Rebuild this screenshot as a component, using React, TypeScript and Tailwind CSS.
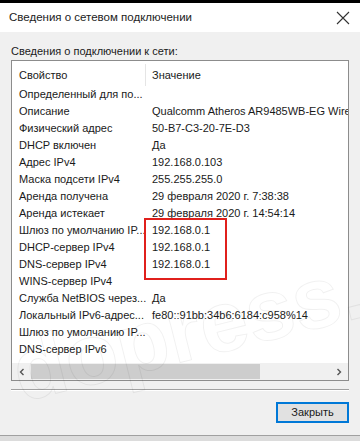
import React from 'react'

const rows: [string, string][] = [
  ['Определенный для по...', ''],
  ['Описание', 'Qualcomm Atheros AR9485WB-EG Wireless Network Adapter'],
  ['Физический адрес', '50-B7-C3-20-7E-D3'],
  ['DHCP включен', 'Да'],
  ['Адрес IPv4', '192.168.0.103'],
  ['Маска подсети IPv4', '255.255.255.0'],
  ['Аренда получена', '29 февраля 2020 г. 7:38:38'],
  ['Аренда истекает', '29 февраля 2020 г. 14:54:14'],
  ['Шлюз по умолчанию IP...', '192.168.0.1'],
  ['DHCP-сервер IPv4', '192.168.0.1'],
  ['DNS-сервер IPv4', '192.168.0.1'],
  ['WINS-сервер IPv4', ''],
  ['Служба NetBIOS через...', 'Да'],
  ['Локальный IPv6-адрес...', 'fe80::91bb:34b6:6184:c958%14'],
  ['Шлюз по умолчанию IP...', ''],
  ['DNS-сервер IPv6', ''],
]

export default function App() {
  return (
    <div className="relative w-[360px] h-[441px] overflow-hidden bg-[#f0f0f0] flex flex-col text-[#1a1a1a] font-['Liberation_Sans',Arial,sans-serif]">
      <div className="h-[3px] bg-black shrink-0" />

      {/* title bar */}
      <div className="h-[29px] shrink-0 bg-white flex items-center justify-between pl-[9px] pr-[9px]">
        <span className="text-[11.5px] text-[#222]">Сведения о сетевом подключении</span>
        <svg width="14" height="14" viewBox="0 0 14 14" className="mr-[1px]">
          <path d="M1 1 L13 13 M13 1 L1 13" stroke="#333" strokeWidth="1.1" />
        </svg>
      </div>

      <div className="px-[11px] pt-[11px] shrink-0">
        <div className="text-[11px] leading-[16px] h-[17px]">Сведения о подключении к сети:</div>

        {/* list box */}
        <div className="relative border border-[#8c8c8c] bg-white h-[321px] flex flex-col overflow-hidden">
          <div className="h-[25px] pt-[3px] flex text-[11px] shrink-0">
            <div className="w-[134px] pl-[7px] border-r border-[#e5e5e5] flex items-center">Свойство</div>
            <div className="pl-[6px] flex items-center">Значение</div>
          </div>
          <div className="flex flex-col shrink-0">
            {rows.map(([k, v], i) => (
              <div key={i} className="h-[17px] flex items-center text-[11px] whitespace-nowrap">
                <div className="w-[134px] pl-[7px] shrink-0 overflow-hidden">{k}</div>
                <div className="pl-[6px]">{v}</div>
              </div>
            ))}
          </div>

          {/* scroll bar */}
          <div className="mt-auto h-[17px] bg-[#f0f0f0] flex items-center shrink-0">
            <div className="w-[19px] flex justify-center">
              <svg width="8" height="8" viewBox="0 0 8 8">
                <path d="M5.5 1 L2.5 4 L5.5 7" stroke="#555" strokeWidth="1.4" fill="none" />
              </svg>
            </div>
            <div className="w-[229px] h-[15px] bg-[#cdcdcd]" />
            <div className="flex-1" />
            <div className="w-[19px] flex justify-center">
              <svg width="8" height="8" viewBox="0 0 8 8">
                <path d="M2.5 1 L5.5 4 L2.5 7" stroke="#555" strokeWidth="1.4" fill="none" />
              </svg>
            </div>
          </div>

          {/* red highlight */}
          <div className="absolute left-[132px] top-[157px] w-[83px] h-[62px] border-2 border-[#e0201c]" />
        </div>
      </div>

      <div className="mx-[11px] mt-[8px] h-[1px] bg-[#a0a0a0] border-b border-white box-content shrink-0" />

      <div className="flex justify-end pr-[11px] pt-[11px] shrink-0">
        <button className="w-[73px] h-[21px] border-2 border-[#0078d7] bg-[#e1e1e1] text-[11px] leading-none flex items-center justify-center">
          Закрыть
        </button>
      </div>

      <div className="mt-auto h-[6px] border-t border-[#a0a0a0] bg-[#dcdcdc] shrink-0" />

      {/* watermark */}
      <div className="pointer-events-none absolute left-[14px] top-[330px] -rotate-[14deg] origin-left text-[86px] font-bold leading-none text-transparent [-webkit-text-stroke:1px_rgba(0,0,0,0.06)]">
        dopress.ru
      </div>
    </div>
  )
}
